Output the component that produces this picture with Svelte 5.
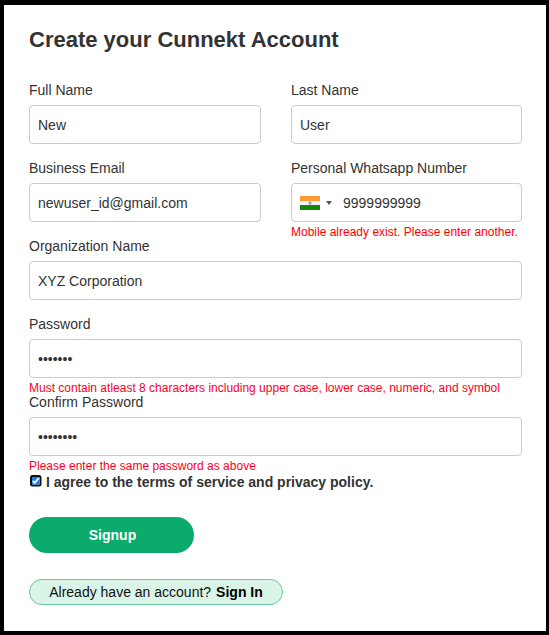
<script lang="ts">
    let firstName = $state("New");
    let lastName = $state("User");
    let email = $state("newuser_id@gmail.com");
    let mobile = $state("9999999999");
    let organization = $state("XYZ Corporation");
    let password = $state("1234567");
    let confirmPassword = $state("12345678");
    let agreed = $state(true);
</script>

<main class="signup-page">
    <h1>Create your Cunnekt Account</h1>

    <form onsubmit={(e) => e.preventDefault()}>
        <div class="row">
            <div class="field">
                <label for="first-name">Full Name</label>
                <input id="first-name" class="control" type="text" bind:value={firstName} />
            </div>
            <div class="field">
                <label for="last-name">Last Name</label>
                <input id="last-name" class="control" type="text" bind:value={lastName} />
            </div>
        </div>

        <div class="row">
            <div class="field">
                <label for="email">Business Email</label>
                <input id="email" class="control" type="text" bind:value={email} />
            </div>
            <div class="field">
                <label for="mobile">Personal Whatsapp Number</label>
                <div class="control phone">
                    <svg class="flag" width="20" height="14" viewBox="0 0 20 14">
                        <rect width="20" height="14" fill="#f4f4f4" />
                        <rect width="20" height="5" fill="#ff9933" />
                        <rect y="9" width="20" height="5" fill="#128807" />
                        <circle cx="10" cy="7" r="1.5" fill="#9292d2" stroke="#b8b8e0" stroke-width="0.6" />
                    </svg>
                    <svg class="caret" width="6" height="4" viewBox="0 0 6 4">
                        <path d="M0 0h6L3 4z" fill="#555" />
                    </svg>
                    <input id="mobile" type="text" bind:value={mobile} />
                </div>
                <p class="error">Mobile already exist. Please enter another.</p>
            </div>
        </div>

        <div class="field">
            <label for="organization">Organization Name</label>
            <input id="organization" class="control" type="text" bind:value={organization} />
        </div>

        <div class="field">
            <label for="password">Password</label>
            <input id="password" class="control" type="password" bind:value={password} />
            <p class="error crimson">
                Must contain atleast 8 characters including upper case, lower case, numeric, and symbol
            </p>
        </div>

        <div class="field">
            <label for="confirm-password">Confirm Password</label>
            <input id="confirm-password" class="control" type="password" bind:value={confirmPassword} />
            <p class="error crimson">Please enter the same password as above</p>
        </div>

        <label class="terms">
            <input class="sr-only" type="checkbox" bind:checked={agreed} />
            <svg class="checkbox" width="13" height="13" viewBox="0 0 13 13">
                <rect x="2" y="2" width="9.5" height="9.5" rx="1.5" fill="#fff" stroke="#101010" stroke-width="2" />
                {#if agreed}
                    <rect x="3" y="3" width="7.5" height="7.5" fill="#1a7cf0" />
                    <path d="M3.7 6.8l2 2 4-4.7" fill="none" stroke="#fff" stroke-width="1.8" />
                {/if}
            </svg>
            <span>I agree to the terms of service and privacy policy.</span>
        </label>

        <button class="submit" type="submit">Signup</button>
    </form>

    <div class="signin">
        <span>Already have an account?</span>
        <strong>Sign In</strong>
    </div>
</main>

<style>
    :global(body) {
        margin: 0;
        background: #000;
    }

    .signup-page {
        box-sizing: border-box;
        width: 549px;
        height: 635px;
        padding: 20px 24px 0 25px;
        border: solid #000;
        border-width: 5px 3px 4px 4px;
        background: #fff;
        color: #333;
        font-family: "Liberation Sans", Arial, sans-serif;
        font-size: 14px;
    }

    h1 {
        height: 30px;
        margin: 0 0 26px;
        font-size: 22px;
        line-height: 30px;
    }

    .row {
        display: grid;
        grid-template-columns: 232px 231px;
        column-gap: 30px;
    }

    .field {
        height: 78px;
    }

    .field label {
        display: block;
        height: 24px;
        line-height: 18px;
    }

    input {
        font: inherit;
        color: inherit;
        outline: none;
    }

    .control {
        display: block;
        box-sizing: border-box;
        width: 100%;
        height: 39px;
        padding: 0 8px;
        border: 1px solid #ccc;
        border-radius: 4px;
        background: #fff;
    }

    .phone {
        display: flex;
        align-items: center;
    }

    .caret {
        margin: 0 11px 0 6px;
    }

    .phone input {
        flex: 1;
        min-width: 0;
        padding: 0;
        border: 0;
        background: none;
    }

    .error {
        margin: 0;
        font-size: 12px;
        line-height: 21px;
        white-space: nowrap;
        color: #f00;
    }

    .crimson {
        color: #fb0025;
    }

    .terms {
        display: flex;
        gap: 4px;
        height: 44px;
        padding-top: 2px;
        font-weight: bold;
        line-height: 18px;
    }

    .checkbox {
        margin-top: 1px;
    }

    .sr-only {
        position: absolute;
        opacity: 0;
    }

    .submit {
        display: block;
        width: 165px;
        height: 36px;
        padding: 0 0 0 2px;
        border: 0;
        border-radius: 18px;
        background: #0bab6c;
        color: #fff;
        font: inherit;
        font-weight: bold;
    }

    .signin {
        display: flex;
        box-sizing: border-box;
        align-items: center;
        justify-content: center;
        gap: 5px;
        width: 254px;
        height: 26px;
        margin-top: 26px;
        border: 1px solid #66ca9e;
        border-radius: 13px;
        background: #daf5e8;
        color: #111;
    }

    strong {
        color: #000;
    }
</style>
